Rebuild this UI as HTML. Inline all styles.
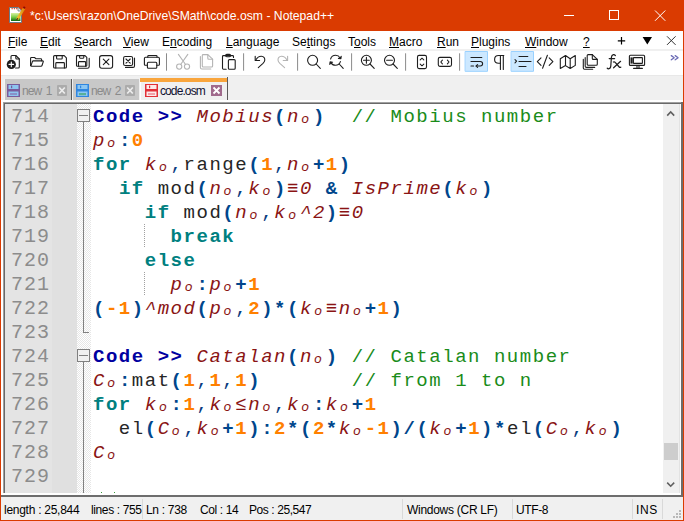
<!DOCTYPE html>
<html><head><meta charset="utf-8">
<style>
*{margin:0;padding:0;box-sizing:border-box}
html,body{width:684px;height:521px;overflow:hidden;background:#fff;font-family:"Liberation Sans",sans-serif}
.a{position:absolute}
#frame{position:absolute;left:0;top:0;width:684px;height:521px;border:1px solid #DA3B01;border-top:0}
#title{left:0;top:0;width:684px;height:31px;background:#DA3B01;color:#fff;font-size:12.2px}
#menu{left:1px;top:31px;width:682px;height:18px;background:#fff;font-size:12px;color:#000}
.mi{position:absolute;top:4px;white-space:nowrap}
.mi u{text-decoration:underline;text-decoration-thickness:1px;text-underline-offset:1px}
#tbline1{left:1px;top:49px;width:682px;height:2px;background:#F0F0F0}
#toolbar{left:1px;top:51px;width:682px;height:24px;background:#fff}
#tbline2{left:1px;top:75px;width:682px;height:1px;background:#E8E8E8}
#tabbar{left:1px;top:76px;width:682px;height:26px;background:#F0F0F0}
.tabt{font-size:12px;letter-spacing:-0.9px;word-spacing:2px;white-space:nowrap;line-height:14px}
#editor{left:0;top:0;width:684px;height:521px}
#code{font-family:"Liberation Mono",monospace;font-size:19px;letter-spacing:1.53px}
.ln{position:absolute;left:5px;width:45px;text-align:right;color:#8C8C8C;height:24px;line-height:24px;font-size:20px;letter-spacing:1px}
.cl{position:absolute;left:93px;white-space:pre;height:24px;line-height:24px;color:#262626}
.kw{color:#008080;font-weight:bold}
.cd{color:#0000A0;font-weight:bold}
.it{color:#8A1414;font-style:italic}
.n{color:#FF8000;font-weight:bold}
.op{color:#00468C;font-weight:bold}
.c{color:#0A3C80}
.cm{color:#1A8C1A}
#status{left:1px;top:497px;width:682px;height:23px;background:#F0F0F0;font-size:12px;color:#000}
.st{position:absolute;top:6px;white-space:nowrap}
.sep{position:absolute;top:2px;width:1px;height:20px;background:#D9D9D9}
</style></head><body>
<div id="title" class="a">
<svg class="a" style="left:0;top:0" width="684" height="31" viewBox="0 0 684 31">
 <defs><linearGradient id="gg" x1="0" y1="0" x2="0" y2="1"><stop offset="0" stop-color="#D8F0A0"/><stop offset="0.5" stop-color="#7CD04A"/><stop offset="1" stop-color="#0A6A10"/></linearGradient>
 <linearGradient id="pg" x1="0" y1="0" x2="1" y2="0"><stop offset="0" stop-color="#F6C230"/><stop offset="1" stop-color="#D88A10"/></linearGradient></defs>
 <path d="M9.5 7.5 H18.5 L21.5 10.5 V22.5 H9.5 Z" fill="#fff" stroke="#6A7A86" stroke-width="1"/>
 <path d="M18 7.5 V11 H21.5" fill="#E0E4E8" stroke="#6A7A86" stroke-width="0.8"/>
 <rect x="11" y="13" width="9.5" height="8" fill="url(#gg)"/>
 <rect x="11.5" y="8" width="1.3" height="1.3" fill="#E05030"/><rect x="13.8" y="8" width="1.3" height="1.3" fill="#E05030"/><rect x="16.1" y="8" width="1.3" height="1.3" fill="#E05030"/>
 <path d="M24.2 8.2 L17.2 19.2" stroke="url(#pg)" stroke-width="2.6" stroke-linecap="butt"/>
 <path d="M17.8 18.2 L16.6 20.2" stroke="#5A4A20" stroke-width="1.4"/>
 <rect x="23.2" y="6.6" width="2" height="2" fill="#8A0A0A" transform="rotate(35 24.2 7.6)"/>
 <g stroke="#fff" stroke-width="1" fill="none">
  <path d="M564 15.5 H574"/>
  <rect x="609.5" y="10.5" width="9" height="9"/>
  <path d="M655 10.5 L665.3 20.8 M665.3 10.5 L655 20.8"/>
 </g>
</svg>

  <span class="a" style="left:30px;top:9px;white-space:nowrap">*c:\Users\razon\OneDrive\SMath\code.osm - Notepad++</span>
</div>
<div id="menu" class="a">
  <span class="mi" style="left:7px"><u>F</u>ile</span>
  <span class="mi" style="left:39px"><u>E</u>dit</span>
  <span class="mi" style="left:73px"><u>S</u>earch</span>
  <span class="mi" style="left:122px"><u>V</u>iew</span>
  <span class="mi" style="left:161px">E<u>n</u>coding</span>
  <span class="mi" style="left:225px"><u>L</u>anguage</span>
  <span class="mi" style="left:291px">Se<u>t</u>tings</span>
  <span class="mi" style="left:347px">T<u>o</u>ols</span>
  <span class="mi" style="left:388px"><u>M</u>acro</span>
  <span class="mi" style="left:436px"><u>R</u>un</span>
  <span class="mi" style="left:470px"><u>P</u>lugins</span>
  <span class="mi" style="left:524px"><u>W</u>indow</span>
  <span class="mi" style="left:582px"><u>?</u></span>
</div>
<svg class="a" style="left:600px;top:31px" width="84" height="18" viewBox="600 31 84 18">
 <path d="M621.5 37 V44.5 M617.8 40.8 H625.2" stroke="#000" stroke-width="1.2"/>
 <path d="M642.6 37 H652 L647.3 44.6 Z" fill="#000"/>
 <path d="M667 36.3 L675.6 44.9 M675.6 36.3 L667 44.9" stroke="#333" stroke-width="1"/>
</svg>

<div id="tbline1" class="a"></div>
<div id="toolbar" class="a"></div>
<svg class="a" style="left:0;top:48px" width="684" height="28" viewBox="0 48 684 28" fill="none" stroke="#1E1E1E" stroke-width="1.1" stroke-linecap="round" stroke-linejoin="round">
 <!-- new -->
 <path d="M11 59 V56.5 Q11 55.5 12 55.5 H15.8 L19.3 59 V67 Q19.3 68 18.3 68 H15.5"/>
 <path d="M15.8 55.5 V58 Q15.8 59 16.8 59 H19.3"/>
 <circle cx="11.3" cy="64.4" r="4.6" fill="#1E1E1E" stroke="none"/>
 <path d="M11.3 62.1 V66.7 M9 64.4 H13.6" stroke="#fff" stroke-width="1.1"/>
 <!-- open -->
 <path d="M30.6 65.5 V58.3 Q30.6 57.5 31.4 57.5 H34.6 L36 58.8 H40.8 Q41.6 58.8 41.6 59.6 V60.8"/>
 <path d="M30.6 65.5 Q30.8 66.2 31.6 66.2 H41 Q41.8 66.2 42 65.5 L43.3 61.6 Q43.4 60.9 42.7 60.9 H33.3 Q32.6 60.9 32.4 61.6 L30.9 65.9"/>
 <!-- save -->
 <path d="M54.6 55.6 H64.2 L66.4 57.8 V67 Q66.4 68 65.4 68 H54.6 Q53.6 68 53.6 67 V56.6 Q53.6 55.6 54.6 55.6 Z"/>
 <path d="M56.6 55.6 V58.2 Q56.6 59 57.4 59 H61.4 Q62.2 59 62.2 58.2 V55.6"/>
 <path d="M55.8 68 V63.4 Q55.8 62.6 56.6 62.6 H63.6 Q64.4 62.6 64.4 63.4 V68"/>
 <!-- save all -->
 <path d="M77.4 55.6 H85 L86.8 57.4 V65.4 Q86.8 66.3 85.9 66.3 H77.4 Q76.5 66.3 76.5 65.4 V56.5 Q76.5 55.6 77.4 55.6 Z"/>
 <path d="M79.6 55.6 V57.6 Q79.6 58.2 80.2 58.2 H83.2 Q83.8 58.2 83.8 57.6 V55.6"/>
 <path d="M78.5 66.3 V62.3 Q78.5 61.6 79.2 61.6 H84.9 Q85.6 61.6 85.6 62.3 V66.3"/>
 <path d="M78.6 68.3 H87.4 Q89.2 68.3 89.2 66.5 V58.2"/>
 <!-- close -->
 <rect x="99.6" y="55.6" width="13" height="12.6" rx="2.2"/>
 <path d="M103.3 59.2 L108.9 64.6 M108.9 59.2 L103.3 64.6"/>
 <!-- close all -->
 <rect x="123.6" y="56.5" width="9" height="9" rx="1.6"/>
 <path d="M126 59 L130.2 63.1 M130.2 59 L126 63.1"/>
 <path d="M125.5 67.4 H133 Q134.5 67.4 134.5 65.9 V58"/>
 <!-- print -->
 <path d="M147.8 57.2 V56.3 Q147.8 55.5 148.6 55.5 H156.2 Q157 55.5 157 56.3 V57.2"/>
 <path d="M147.4 65.3 H145.2 Q144.4 65.3 144.4 64.5 V58.4 Q144.4 57.2 145.6 57.2 H158.2 Q159.4 57.2 159.4 58.4 V64.5 Q159.4 65.3 158.6 65.3 H156.8"/>
 <rect x="147.4" y="62.3" width="9.4" height="6" rx="1"/>
 <!-- sep -->
 <path d="M166.5 53.3 V70.7" stroke="#8A8A8A" stroke-width="1" stroke-linecap="butt"/>
 <!-- cut (disabled) -->
 <g stroke="#B4B4B4">
 <path d="M178.4 54.4 L185.4 64.3 M187.8 54.4 L180.8 64.3"/>
 <circle cx="179.2" cy="66.6" r="2.6"/>
 <circle cx="187" cy="66.6" r="2.6"/>
 <!-- copy -->
 <path d="M203.2 54.6 H207.8 L212.6 59.2 V66 Q212.6 67 211.6 67 H203.2 Q202.3 67 202.3 66 V55.5 Q202.3 54.6 203.2 54.6 Z"/>
 <path d="M207.8 54.6 V58.2 Q207.8 59.2 208.8 59.2 H212.6"/>
 <path d="M200.4 56.5 V67.5 Q200.4 69 201.9 69 H210.8"/>
 </g>
 <!-- paste -->
 <path d="M226.2 69.2 H223.4 Q222.5 69.2 222.5 68.3 V56.5 Q222.5 55.6 223.4 55.6 H232.6 Q233.5 55.6 233.5 56.5 V57.4"/>
 <rect x="225.6" y="54.4" width="5" height="2.4" rx="1.2"/>
 <rect x="228.4" y="59.6" width="6.8" height="9.6" rx="1"/>
 <!-- sep -->
 <path d="M243.6 53.3 V70.7" stroke="#8A8A8A" stroke-width="1" stroke-linecap="butt"/>
 <!-- undo -->
 <path d="M255.2 56.3 V60.5 H259.6"/>
 <path d="M255.8 60 Q258 56.2 261.4 56.3 Q264.8 56.6 264.8 60 Q264.8 61.6 263 63.4 L258.3 67.6"/>
 <!-- redo -->
 <g stroke="#B4B4B4">
 <path d="M287.6 56.3 V60.5 H283.2"/>
 <path d="M287 60 Q284.8 56.2 281.4 56.3 Q278 56.6 278 60 Q278 61.6 279.8 63.4 L284.6 67.6"/>
 </g>
 <path d="M297.6 53.3 V70.7" stroke="#8A8A8A" stroke-width="1" stroke-linecap="butt"/>
 <!-- find -->
 <circle cx="312.6" cy="60.3" r="5"/>
 <path d="M316.2 64 L320.3 68.4"/>
 <!-- replace -->
 <path d="M330.6 59 Q331.8 55.3 335.6 55.3 Q338.6 55.3 340.2 58"/>
 <path d="M341.2 56.2 L340.9 58.7 L338.4 58.4" fill="#1E1E1E"/>
 <path d="M340.4 61.6 Q339.2 65.3 335.4 65.3 Q332.4 65.3 330.8 62.6"/>
 <path d="M329.8 64.4 L330.1 61.9 L332.6 62.2" fill="#1E1E1E"/>
 <path d="M339.2 64 L343.2 68.4"/>
 <path d="M351.6 53.3 V70.7" stroke="#8A8A8A" stroke-width="1" stroke-linecap="butt"/>
 <!-- zoom in -->
 <circle cx="366.4" cy="60.3" r="5"/>
 <path d="M366.4 57.4 V63.2 M363.5 60.3 H369.3"/>
 <path d="M370 64 L374.2 68.4"/>
 <!-- zoom out -->
 <circle cx="389.5" cy="60.3" r="5"/>
 <path d="M386.6 60.3 H392.4"/>
 <path d="M393.1 64 L397.3 68.4"/>
 <path d="M405.6 53.3 V70.7" stroke="#8A8A8A" stroke-width="1" stroke-linecap="butt"/>
 <!-- sync v -->
 <rect x="417.5" y="55.4" width="9" height="13.2" rx="1.6"/>
 <path d="M420.2 59.8 L422 58.2 L423.8 59.8 M420.2 64.2 L422 65.8 L423.8 64.2"/>
 <!-- sync h -->
 <rect x="438.3" y="57.4" width="13.2" height="9" rx="1.6"/>
 <path d="M442.4 60.2 L440.8 62 L442.4 63.8 M447.4 60.2 L449 62 L447.4 63.8"/>
 <path d="M459.6 53.3 V70.7" stroke="#8A8A8A" stroke-width="1" stroke-linecap="butt"/>
 <!-- wrap button -->
 <rect x="465.5" y="51.5" width="22" height="19.8" fill="#CCE8FF" stroke="#99D1FF" stroke-width="1"/>
 <path d="M471 57.5 H481.8"/>
 <path d="M471 61.5 H480.2 Q482.6 61.5 482.6 63.8 Q482.6 66 480.2 66 H476.2"/>
 <path d="M477.6 64.6 L476.1 66 L477.6 67.4"/>
 <path d="M471 66 H473.6"/>
 <!-- pilcrow -->
 <path d="M503.3 55.6 V69.4 M500.4 55.6 V69.4"/>
 <path d="M503.8 55.5 H498.6 Q494.6 55.5 494.6 59.4 Q494.6 63.2 498.6 63.2 H500.4"/>
 <!-- indent button -->
 <rect x="511.5" y="51.5" width="22" height="19.8" fill="#CCE8FF" stroke="#99D1FF" stroke-width="1"/>
 <path d="M515 59.6 L516.6 61.2 L515 62.8"/>
 <path d="M519 56.5 H527.8 M519 61.5 H531 M519 66.5 H526"/>
 <!-- </> -->
 <path d="M541 57.9 L537.3 61.7 L541 65.4 M549.2 57.9 L552.9 61.7 L549.2 65.4 M547.4 55.3 L542.6 68.3"/>
 <!-- map -->
 <path d="M560.3 58.7 L565.5 55.5 L570.2 58.7 L575.3 55.5 V65.4 L570.2 68.5 L565.5 65.6 L560.3 68.5 Z M565.5 55.5 V65.6 M570.2 58.7 V68.5"/>
 <!-- doc list -->
 <path d="M588.2 54.6 H592.3 L597.3 59.4 V64.2 Q597.3 65.2 596.3 65.2 H588.2 Q587.2 65.2 587.2 64.2 V55.6 Q587.2 54.6 588.2 54.6 Z"/>
 <path d="M592.3 54.6 V58.4 Q592.3 59.4 593.3 59.4 H597.3"/>
 <path d="M585.2 57.6 V66.2 Q585.2 67.4 586.4 67.4 H594.7"/>
 <path d="M583.3 59.4 V68 Q583.3 69.2 584.5 69.2 H592.7"/>
 <!-- monitor -->
 <rect x="629.4" y="55.2" width="15.2" height="10.2" rx="1"/>
 <rect x="633.4" y="57.6" width="9" height="5.8" rx="0.5"/>
 <path d="M631.6 57.4 V63.6" stroke-width="2.2" stroke-linecap="butt"/>
 <path d="M637 65.4 V68.2 M639 65.4 V68.2 M633.6 68.4 H642.4"/>
 <!-- >> -->
 <path d="M671.3 55.6 L674.2 57.7 L671.3 59.8 M675.2 55.6 L678.1 57.7 L675.2 59.8" stroke="#6B6BB5" stroke-width="1.3"/>
</svg>
<svg class="a" style="left:600px;top:50px" width="26" height="24" viewBox="600 50 26 24" fill="none" stroke="#1E1E1E" stroke-width="1.2" stroke-linecap="round">
 <path d="M615.4 55.6 Q614.6 54.4 613.4 54.6 Q611.6 55 611.4 57.4 L610.8 66 Q610.6 68.6 608.6 68.8 Q607.6 68.8 607.2 68.2"/>
 <path d="M609.2 58.6 H614.6"/>
 <path d="M613.4 62 Q614.4 61.4 615.2 62.4 L619.2 67 Q619.9 67.8 620.8 67.2"/>
 <path d="M620.6 61.3 L613.6 67.8"/>
</svg>

<div id="tbline2" class="a"></div>
<div class="a" style="left:1px;top:76px;width:682px;height:25px;background:#F0F0F0"></div>

<!-- tab1 -->
<div class="a" style="left:4px;top:79px;width:67px;height:21px;background:#C8C8C8;border-left:1px solid #F4F4F4"></div>
<div class="a" style="left:71px;top:79px;width:1px;height:21px;background:#5A5A5A"></div>
<!-- tab2 -->
<div class="a" style="left:73px;top:79px;width:66px;height:21px;background:#C8C8C8"></div>
<!-- active -->
<div class="a" style="left:140px;top:78px;width:87px;height:22px;background:#F0F0F0;border-left:1px solid #fff"></div>
<div class="a" style="left:140px;top:78px;width:87px;height:4px;background:#F9A53C"></div>
<div class="a" style="left:227px;top:77px;width:1px;height:23px;background:#5A5A5A"></div>
<div class="a" style="left:1px;top:100px;width:682px;height:2px;background:#FFFFFF"></div>
<svg class="a" style="left:0;top:76px" width="240" height="26" viewBox="0 76 240 26">
 <!-- floppy purple -->
 <rect x="7" y="84" width="13" height="13" fill="#7A5C9C"/>
 <rect x="8.5" y="85" width="10" height="4" fill="#8EC6F0"/>
 <rect x="11" y="85.6" width="1.2" height="2.6" fill="#7A5C9C"/>
 <rect x="8.5" y="91.5" width="10" height="4.5" fill="#8EC6F0"/>
 <rect x="10" y="93" width="7" height="2" fill="#8A90C8"/>
 <!-- floppy blue -->
 <rect x="76" y="84" width="13" height="13" fill="#2F86E0"/>
 <rect x="77.5" y="85" width="10" height="4" fill="#8CC6F2"/>
 <rect x="80" y="85.6" width="1.2" height="2.6" fill="#2F86E0"/>
 <rect x="77.5" y="91.5" width="10" height="4.5" fill="#8CC6F2"/>
 <rect x="79" y="93" width="7" height="2.2" fill="#58B098"/>
 <!-- floppy red -->
 <rect x="145" y="84" width="13" height="13" fill="#E23038"/>
 <rect x="146.5" y="85" width="10" height="4" fill="#FCEAEA"/>
 <rect x="149" y="85.6" width="1.2" height="2.6" fill="#E23038"/>
 <rect x="146.5" y="91.5" width="10" height="4.5" fill="#FCEAEA"/>
 <rect x="148" y="93" width="7" height="2" fill="#F0A0A8"/>
 <!-- close boxes -->
 <rect x="57" y="85" width="10" height="11" rx="1" fill="#ABABAB"/>
 <path d="M59.2 87.5 L64.8 93.5 M64.8 87.5 L59.2 93.5" stroke="#EDEDED" stroke-width="1.7"/>
 <rect x="125" y="85" width="10" height="11" rx="1" fill="#ABABAB"/>
 <path d="M127.2 87.5 L132.8 93.5 M132.8 87.5 L127.2 93.5" stroke="#EDEDED" stroke-width="1.7"/>
 <rect x="211" y="85" width="11" height="11" fill="#A06A8C"/>
 <path d="M213.5 87.5 L219.5 93.5 M219.5 87.5 L213.5 93.5" stroke="#fff" stroke-width="1.8"/>
</svg>
<span class="a tabt" style="left:22px;top:84px;color:#8A8A8A">new 1</span>
<span class="a tabt" style="left:91px;top:84px;color:#8A8A8A">new 2</span>
<span class="a tabt" style="left:160px;top:84px;color:#101030">code.osm</span>

<div id="editor" class="a">
 <div class="a" style="left:1px;top:101px;width:682px;height:1px;background:#fff"></div>
 <div class="a" style="left:3px;top:102px;width:678px;height:1px;background:#A0A0A0"></div>
 <div class="a" style="left:3px;top:102px;width:1px;height:393px;background:#A0A0A0"></div>
 <div class="a" style="left:4px;top:103px;width:677px;height:1px;background:#696969"></div>
 <div class="a" style="left:4px;top:103px;width:1px;height:390px;background:#696969"></div>
 <div class="a" style="left:1px;top:493px;width:680px;height:2px;background:#fff"></div>
 <div class="a" style="left:680px;top:104px;width:1px;height:391px;background:#fff"></div>
 <div class="a" style="left:681px;top:102px;width:2px;height:395px;background:#6D6D6D"></div>
 <div class="a" style="left:1px;top:495px;width:682px;height:2px;background:#6D6D6D"></div>
 <div id="content" class="a" style="left:5px;top:104px;width:675px;height:389px;overflow:hidden;background:#fff">
  <div class="a" style="left:0;top:0;width:47px;height:389px;background:#E4E4E4"></div>
  <div class="a" style="left:47px;top:0;width:25px;height:389px;background:#E0E0E0"></div>
  <div class="a" style="left:72px;top:0;width:14px;height:389px;background:repeating-conic-gradient(#E6E6E6 0% 25%,#fff 0% 50%) 0 0/2px 2px"></div>
  <!-- fold markers -->
  <div class="a" style="left:72px;top:5px;width:13px;height:13px;border:1px solid #808080;background:#F0F0F0"></div>
  <div class="a" style="left:74px;top:11px;width:9px;height:1px;background:#808080"></div>
  <div class="a" style="left:78px;top:18px;width:1px;height:211px;background:#808080"></div>
  <div class="a" style="left:78px;top:228px;width:6px;height:1px;background:#808080"></div>
  <div class="a" style="left:72px;top:245px;width:13px;height:13px;border:1px solid #808080;background:#F0F0F0"></div>
  <div class="a" style="left:74px;top:251px;width:9px;height:1px;background:#808080"></div>
  <div class="a" style="left:78px;top:258px;width:1px;height:140px;background:#808080"></div>
  <!-- indent guides -->
  <div class="a" style="left:96px;top:388px;width:1px;height:1px;background:#3A9A3A"></div>
  <div class="a" style="left:109px;top:388px;width:1px;height:1px;background:#3A9A3A"></div>
  <div class="a" style="left:139px;top:120px;width:1px;height:24px;background:repeating-linear-gradient(#A0A0A0 0 1px,transparent 1px 2px)"></div>
  <div class="a" style="left:139px;top:168px;width:1px;height:24px;background:repeating-linear-gradient(#A0A0A0 0 1px,transparent 1px 2px)"></div>
  <div id="code" class="a" style="left:-5px;top:1px;width:675px;height:389px">
<div class="ln" style="top:0px">714</div>
<div class="cl" style="top:0px"><span class="cd">Code &gt;&gt;</span> <span class="it">Mobius</span><span class="op">(</span><span class="it">nₒ</span><span class="op">)</span>  <span class="cm">// Mobius number</span></div>
<div class="ln" style="top:24px">715</div>
<div class="cl" style="top:24px"><span class="it">pₒ</span><span class="op">:</span><span class="n">0</span></div>
<div class="ln" style="top:48px">716</div>
<div class="cl" style="top:48px"><span class="kw">for</span> <span class="it">kₒ</span><span class="c">,</span>range<span class="op">(</span><span class="n">1</span><span class="c">,</span><span class="it">nₒ</span><span class="op">+</span><span class="n">1</span><span class="op">)</span></div>
<div class="ln" style="top:72px">717</div>
<div class="cl" style="top:72px">  <span class="kw">if</span> mod<span class="op">(</span><span class="it">nₒ</span><span class="c">,</span><span class="it">kₒ</span><span class="op">)</span><span class="it">≡0</span> <span class="op">&amp;</span> <span class="it">IsPrime</span><span class="op">(</span><span class="it">kₒ</span><span class="op">)</span></div>
<div class="ln" style="top:96px">718</div>
<div class="cl" style="top:96px">    <span class="kw">if</span> mod<span class="op">(</span><span class="it">nₒ</span><span class="c">,</span><span class="it">kₒ^2</span><span class="op">)</span><span class="it">≡0</span></div>
<div class="ln" style="top:120px">719</div>
<div class="cl" style="top:120px">      <span class="kw">break</span></div>
<div class="ln" style="top:144px">720</div>
<div class="cl" style="top:144px">    <span class="kw">else</span></div>
<div class="ln" style="top:168px">721</div>
<div class="cl" style="top:168px">      <span class="it">pₒ</span><span class="op">:</span><span class="it">pₒ</span><span class="op">+</span><span class="n">1</span></div>
<div class="ln" style="top:192px">722</div>
<div class="cl" style="top:192px"><span class="op">(</span><span class="n">-1</span><span class="op">)</span><span class="it">^mod</span><span class="op">(</span><span class="it">pₒ</span><span class="c">,</span><span class="n">2</span><span class="op">)*(</span><span class="it">kₒ≡nₒ</span><span class="op">+</span><span class="n">1</span><span class="op">)</span></div>
<div class="ln" style="top:216px">723</div>
<div class="cl" style="top:216px"></div>
<div class="ln" style="top:240px">724</div>
<div class="cl" style="top:240px"><span class="cd">Code &gt;&gt;</span> <span class="it">Catalan</span><span class="op">(</span><span class="it">nₒ</span><span class="op">)</span> <span class="cm">// Catalan number</span></div>
<div class="ln" style="top:264px">725</div>
<div class="cl" style="top:264px"><span class="it">Cₒ</span><span class="op">:</span>mat<span class="op">(</span><span class="n">1</span><span class="c">,</span><span class="n">1</span><span class="c">,</span><span class="n">1</span><span class="op">)</span>       <span class="cm">// from 1 to n</span></div>
<div class="ln" style="top:288px">726</div>
<div class="cl" style="top:288px"><span class="kw">for</span> <span class="it">kₒ</span><span class="op">:</span><span class="n">1</span><span class="c">,</span><span class="it">kₒ≤nₒ</span><span class="c">,</span><span class="it">kₒ</span><span class="op">:</span><span class="it">kₒ</span><span class="op">+</span><span class="n">1</span></div>
<div class="ln" style="top:312px">727</div>
<div class="cl" style="top:312px">  el<span class="op">(</span><span class="it">Cₒ</span><span class="c">,</span><span class="it">kₒ</span><span class="op">+</span><span class="n">1</span><span class="op">):</span><span class="n">2</span><span class="op">*(</span><span class="n">2</span><span class="op">*</span><span class="it">kₒ</span><span class="n">-1</span><span class="op">)/(</span><span class="it">kₒ</span><span class="op">+</span><span class="n">1</span><span class="op">)*</span>el<span class="op">(</span><span class="it">Cₒ</span><span class="c">,</span><span class="it">kₒ</span><span class="op">)</span></div>
<div class="ln" style="top:336px">728</div>
<div class="cl" style="top:336px"><span class="it">Cₒ</span></div>
<div class="ln" style="top:360px">729</div>
<div class="cl" style="top:360px"></div>
<div class="ln" style="top:384px">730</div>
<div class="cl" style="top:384px"><span class="cm">// </span></div>
  </div>
  <!-- scrollbar -->
  <div class="a" style="left:658px;top:0;width:17px;height:389px;background:#F0F0F0"></div>
  <div class="a" style="left:674px;top:0;width:1px;height:389px;background:#E3E3E3"></div>
  <div class="a" style="left:659px;top:339px;width:14px;height:17px;background:#CDCDCD"></div>
  <svg class="a" style="left:658px;top:0" width="17" height="389" viewBox="663 104 17 389">
   <path d="M667.2 115.6 L670.7 112 L674.2 115.6" fill="none" stroke="#606060" stroke-width="1.6"/>
   <path d="M667.2 482.6 L670.7 486.2 L674.2 482.6" fill="none" stroke="#606060" stroke-width="1.6"/>
  </svg>
 </div>
</div>
<div id="status" class="a">
  <span class="st" style="left:3px;letter-spacing:-0.27px">length : 25,844</span>
  <span class="st" style="left:90px;letter-spacing:-0.38px">lines : 755</span>
  <span class="sep" style="left:141px"></span>
  <span class="st" style="left:145px;letter-spacing:-0.3px">Ln : 738</span>
  <span class="st" style="left:199px;letter-spacing:-0.39px">Col : 14</span>
  <span class="st" style="left:248px;letter-spacing:-0.42px">Pos : 25,547</span>
  <span class="sep" style="left:401px"></span>
  <span class="st" style="left:406px;letter-spacing:-0.28px">Windows (CR LF)</span>
  <span class="sep" style="left:511px"></span>
  <span class="st" style="left:515px;letter-spacing:-0.38px">UTF-8</span>
  <span class="sep" style="left:631px"></span>
  <span class="st" style="left:635px;letter-spacing:0.6px">INS</span>
  <span class="sep" style="left:661px"></span>
</div>
<svg class="a" style="left:660px;top:497px" width="23" height="23" viewBox="660 497 23 23">
 <g fill="#B8B8B8">
 <rect x="679" y="510" width="2" height="2"/>
 <rect x="676" y="513" width="2" height="2"/><rect x="679" y="513" width="2" height="2"/>
 <rect x="673" y="516" width="2" height="2"/><rect x="676" y="516" width="2" height="2"/><rect x="679" y="516" width="2" height="2"/>
 </g>
</svg>

<div id="frame"></div>
</body></html>
